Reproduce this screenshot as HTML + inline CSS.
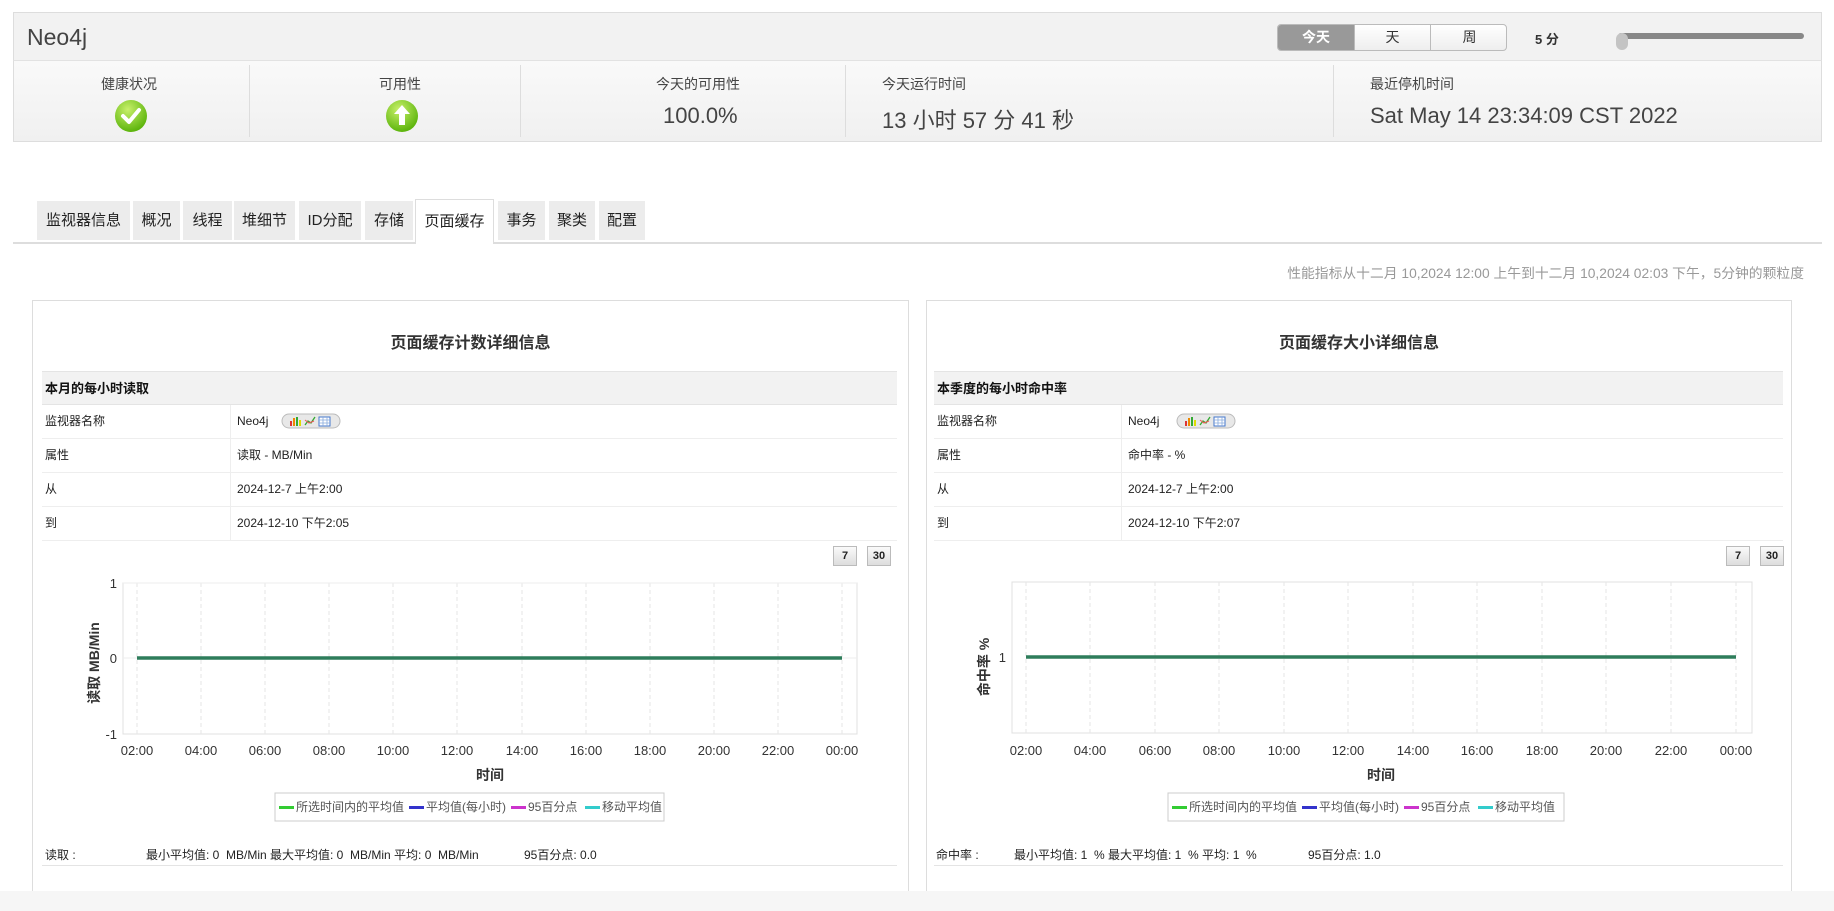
<!DOCTYPE html>
<html><head><meta charset="utf-8"><style>
*{margin:0;padding:0;box-sizing:border-box}
body{width:1834px;height:911px;position:relative;background:#fff;font-family:"Liberation Sans","Noto Sans CJK SC",sans-serif;color:#333;overflow:hidden}
.a{position:absolute;white-space:nowrap}
.hdr{left:13px;top:12px;width:1809px;height:130px;border:1px solid #ddd;background:linear-gradient(#fff,#f0f0f0)}
.bar{left:13px;top:12px;width:1809px;height:49px;background:#f2f2f2;border:1px solid #ddd;border-bottom:1px solid #e2e2e2}
.div{width:1px;background:#ddd;top:65px;height:72px}
.lbl{font-size:14px;color:#444;top:74px}
.val{font-size:22px;color:#444;top:103px}
.tab{top:201px;height:39px;background:#ececec;font-size:15px;color:#222;line-height:39px;text-align:center}
.panel{border:1px solid #ddd;background:#fff}
.sec{height:34px;background:#f2f2f2;border-top:1px solid #e4e4e4;border-bottom:1px solid #e4e4e4;font-size:13px;font-weight:bold;color:#111;line-height:34px;padding-left:3px}
.row{height:34px;border-bottom:1px solid #eee;font-size:12px;color:#222;line-height:33px}
.btn{width:24px;height:20px;background:linear-gradient(#fafafa,#ddd);border:1px solid #bbb;font-size:11px;font-weight:bold;line-height:18px;text-align:center;color:#222}
.st{font-size:12px;color:#222;top:846px}
</style></head><body>
<div class="a hdr"></div>
<div class="a bar"></div>
<div class="a" style="left:27px;top:24px;font-size:23px;color:#444">Neo4j</div>
<div class="a" style="left:1277px;top:24px;width:230px;height:27px;border:1px solid #bbb;border-radius:4px;overflow:hidden;background:linear-gradient(#fff,#eee)">
<div class="a" style="left:0;top:0;width:76px;height:27px;background:#999;color:#fff;font-size:14px;font-weight:bold;text-align:center;line-height:25px">今天</div>
<div class="a" style="left:76px;top:0;width:77px;height:27px;border-left:1px solid #bbb;border-right:1px solid #bbb;font-size:14px;text-align:center;line-height:25px">天</div>
<div class="a" style="left:153px;top:0;width:77px;height:27px;font-size:14px;text-align:center;line-height:25px">周</div>
</div>
<div class="a" style="left:1535px;top:29px;font-size:13px;font-weight:bold;color:#333">5 分</div>
<div class="a" style="left:1618px;top:33px;width:186px;height:6px;border-radius:3px;background:#888"></div>
<div class="a" style="left:1616px;top:33px;width:12px;height:17px;border-radius:6px;background:#c4c4c4"></div>

<div class="a div" style="left:249px"></div>
<div class="a div" style="left:520px"></div>
<div class="a div" style="left:845px"></div>
<div class="a div" style="left:1333px"></div>
<div class="a lbl" style="left:101px">健康状况</div>
<div class="a lbl" style="left:379px">可用性</div>
<div class="a lbl" style="left:656px">今天的可用性</div>
<div class="a lbl" style="left:882px">今天运行时间</div>
<div class="a lbl" style="left:1370px">最近停机时间</div>
<svg class="a" style="left:114px;top:99px" width="34" height="34" viewBox="0 0 34 34"><defs><radialGradient id="g" cx="40%" cy="30%" r="70%"><stop offset="0" stop-color="#c8f06a"/><stop offset="1" stop-color="#5cb40c"/></radialGradient></defs><circle cx="17" cy="17" r="16" fill="url(#g)"/><path d="M9 17l6 6 10-12" stroke="#fff" stroke-width="4" fill="none" stroke-linecap="round" stroke-linejoin="round"/></svg>
<svg class="a" style="left:385px;top:99px" width="34" height="34" viewBox="0 0 34 34"><circle cx="17" cy="17" r="16" fill="url(#g)"/><path d="M17 6l-8 9h5v11h6V15h5z" fill="#fff"/></svg>
<div class="a val" style="left:663px">100.0%</div>
<div class="a val" style="left:882px">13 小时 57 分 41 秒</div>
<div class="a val" style="left:1370px">Sat May 14 23:34:09 CST 2022</div>

<div class="a" style="left:13px;top:242px;width:1809px;height:2px;background:#ddd"></div>
<div class="a tab" style="left:37px;width:93px">监视器信息</div>
<div class="a tab" style="left:133px;width:47px">概况</div>
<div class="a tab" style="left:183px;width:49px">线程</div>
<div class="a tab" style="left:234px;width:61px">堆细节</div>
<div class="a tab" style="left:299px;width:62px">ID分配</div>
<div class="a tab" style="left:365px;width:48px">存储</div>
<div class="a tab" style="left:415px;width:79px;background:#fff;border:1px solid #ddd;border-bottom:none;top:199px;height:45px;line-height:43px">页面缓存</div>
<div class="a tab" style="left:498px;width:47px">事务</div>
<div class="a tab" style="left:549px;width:46px">聚类</div>
<div class="a tab" style="left:599px;width:46px">配置</div>
<div class="a" style="right:30px;top:262px;font-size:13.8px;color:#999">性能指标从十二月 10,2024 12:00 上午到十二月 10,2024 02:03 下午，5分钟的颗粒度</div>

<!-- left panel -->
<div class="a panel" style="left:32px;top:300px;width:877px;height:600px"></div>
<div class="a" style="left:32px;top:329px;width:877px;text-align:center;font-size:16px;font-weight:bold;color:#333">页面缓存计数详细信息</div>
<div class="a sec" style="left:42px;top:371px;width:855px">本月的每小时读取</div>
<div class="a row" style="left:42px;top:405px;width:855px"><span class="a" style="left:3px">监视器名称</span><span class="a" style="left:195px">Neo4j</span></div>
<div class="a row" style="left:42px;top:439px;width:855px"><span class="a" style="left:3px">属性</span><span class="a" style="left:195px">读取 - MB/Min</span></div>
<div class="a row" style="left:42px;top:473px;width:855px"><span class="a" style="left:3px">从</span><span class="a" style="left:195px">2024-12-7 上午2:00</span></div>
<div class="a row" style="left:42px;top:507px;width:855px"><span class="a" style="left:3px">到</span><span class="a" style="left:195px">2024-12-10 下午2:05</span></div>
<div class="a" style="left:230px;top:405px;width:1px;height:136px;background:#eee"></div>
<div class="a btn" style="left:833px;top:546px">7</div>
<div class="a btn" style="left:867px;top:546px">30</div>
<div class="a st" style="left:45px">读取 :</div>
<div class="a st" style="left:146px">最小平均值: 0 &nbsp;MB/Min 最大平均值: 0 &nbsp;MB/Min 平均: 0 &nbsp;MB/Min</div>
<div class="a st" style="left:524px">95百分点: 0.0</div>
<div class="a" style="left:42px;top:865px;width:855px;height:1px;background:#e4e4e4"></div>

<!-- right panel -->
<div class="a panel" style="left:926px;top:300px;width:866px;height:600px"></div>
<div class="a" style="left:926px;top:329px;width:866px;text-align:center;font-size:16px;font-weight:bold;color:#333">页面缓存大小详细信息</div>
<div class="a sec" style="left:934px;top:371px;width:849px">本季度的每小时命中率</div>
<div class="a row" style="left:934px;top:405px;width:849px"><span class="a" style="left:3px">监视器名称</span><span class="a" style="left:194px">Neo4j</span></div>
<div class="a row" style="left:934px;top:439px;width:849px"><span class="a" style="left:3px">属性</span><span class="a" style="left:194px">命中率 - %</span></div>
<div class="a row" style="left:934px;top:473px;width:849px"><span class="a" style="left:3px">从</span><span class="a" style="left:194px">2024-12-7 上午2:00</span></div>
<div class="a row" style="left:934px;top:507px;width:849px"><span class="a" style="left:3px">到</span><span class="a" style="left:194px">2024-12-10 下午2:07</span></div>
<div class="a" style="left:1121px;top:405px;width:1px;height:136px;background:#eee"></div>
<div class="a btn" style="left:1726px;top:546px">7</div>
<div class="a btn" style="left:1760px;top:546px">30</div>
<div class="a st" style="left:936px">命中率 :</div>
<div class="a st" style="left:1014px">最小平均值: 1 &nbsp;% 最大平均值: 1 &nbsp;% 平均: 1 &nbsp;%</div>
<div class="a st" style="left:1308px">95百分点: 1.0</div>
<div class="a" style="left:934px;top:865px;width:849px;height:1px;background:#e4e4e4"></div>

<div class="a" style="left:0;top:891px;width:1834px;height:20px;background:#f6f6f6"></div>

<svg class="a" style="left:0;top:0" width="1834" height="911" font-family="Liberation Sans, Noto Sans CJK SC, sans-serif">
<defs>
<g id="ic"><rect x="0" y="0" width="58" height="14" rx="7" fill="#e8e8e8" stroke="#bbb"/>
<rect x="8" y="7" width="2" height="5" fill="#d33"/><rect x="11" y="4" width="2" height="8" fill="#e80"/><rect x="14" y="3" width="2" height="9" fill="#3a3"/><rect x="17" y="6" width="2" height="6" fill="#dd0"/>
<path d="M23 11l3-4 3 2 4-6" stroke="#3a3" stroke-width="1.3" fill="none"/><path d="M23 6l4 3 5-2" stroke="#e55" stroke-width="1" fill="none"/>
<rect x="37" y="3" width="11" height="9" fill="#fff" stroke="#47c"/><path d="M37 6h11M37 9h11M41 3v9M45 3v9" stroke="#8ad" stroke-width=".8"/></g>
</defs>
<use href="#ic" x="282" y="414"/>
<use href="#ic" x="1177" y="414"/>
<!-- left chart -->
<rect x="123" y="583" width="734" height="151" fill="#fff" stroke="#e0e0e0"/>
<g stroke="#e6e6e6" stroke-dasharray="4,3">
<path d="M137 583v151M201 583v151M265 583v151M329 583v151M393 583v151M457 583v151M522 583v151M586 583v151M650 583v151M714 583v151M778 583v151M842 583v151"/></g>
<path d="M123 583h734M123 658h734" stroke="#eee"/>
<line x1="137" y1="658" x2="842" y2="658" stroke="#2e7d5b" stroke-width="3.5"/>
<g font-size="13" fill="#333" text-anchor="end"><text x="117" y="588">1</text><text x="117" y="663">0</text><text x="117" y="739">-1</text></g>
<g font-size="13" fill="#333" text-anchor="middle">
<text x="137" y="755">02:00</text><text x="201" y="755">04:00</text><text x="265" y="755">06:00</text><text x="329" y="755">08:00</text><text x="393" y="755">10:00</text><text x="457" y="755">12:00</text><text x="522" y="755">14:00</text><text x="586" y="755">16:00</text><text x="650" y="755">18:00</text><text x="714" y="755">20:00</text><text x="778" y="755">22:00</text><text x="842" y="755">00:00</text>
<text x="490" y="780" font-weight="bold" font-size="14">时间</text>
<text transform="translate(99,663) rotate(-90)" font-size="14" font-weight="bold">读取  MB/Min</text>
</g>
<rect x="275" y="793" width="389" height="28" fill="#fff" stroke="#ccc"/>
<g font-size="12" fill="#555"><rect x="279" y="806" width="15" height="3" fill="#3c3"/><text x="296" y="811">所选时间内的平均值</text>
<rect x="409" y="806" width="15" height="3" fill="#33c"/><text x="426" y="811">平均值(每小时)</text>
<rect x="511" y="806" width="15" height="3" fill="#c3c"/><text x="528" y="811">95百分点</text>
<rect x="585" y="806" width="15" height="3" fill="#3cc"/><text x="602" y="811">移动平均值</text></g>
<!-- right chart -->
<rect x="1012" y="582" width="740" height="151" fill="#fff" stroke="#e0e0e0"/>
<g stroke="#e6e6e6" stroke-dasharray="4,3">
<path d="M1026 582v151M1090 582v151M1155 582v151M1219 582v151M1284 582v151M1348 582v151M1413 582v151M1477 582v151M1542 582v151M1606 582v151M1671 582v151M1736 582v151"/></g>
<line x1="1026" y1="657" x2="1736" y2="657" stroke="#2e7d5b" stroke-width="3.5"/>
<g font-size="13" fill="#333" text-anchor="end"><text x="1006" y="662">1</text></g>
<g font-size="13" fill="#333" text-anchor="middle">
<text x="1026" y="755">02:00</text><text x="1090" y="755">04:00</text><text x="1155" y="755">06:00</text><text x="1219" y="755">08:00</text><text x="1284" y="755">10:00</text><text x="1348" y="755">12:00</text><text x="1413" y="755">14:00</text><text x="1477" y="755">16:00</text><text x="1542" y="755">18:00</text><text x="1606" y="755">20:00</text><text x="1671" y="755">22:00</text><text x="1736" y="755">00:00</text>
<text x="1381" y="780" font-weight="bold" font-size="14">时间</text>
<text transform="translate(989,667) rotate(-90)" font-size="14" font-weight="bold">命中率  %</text>
</g>
<rect x="1168" y="793" width="396" height="28" fill="#fff" stroke="#ccc"/>
<g font-size="12" fill="#555"><rect x="1172" y="806" width="15" height="3" fill="#3c3"/><text x="1189" y="811">所选时间内的平均值</text>
<rect x="1302" y="806" width="15" height="3" fill="#33c"/><text x="1319" y="811">平均值(每小时)</text>
<rect x="1404" y="806" width="15" height="3" fill="#c3c"/><text x="1421" y="811">95百分点</text>
<rect x="1478" y="806" width="15" height="3" fill="#3cc"/><text x="1495" y="811">移动平均值</text></g>
</svg>
</body></html>
